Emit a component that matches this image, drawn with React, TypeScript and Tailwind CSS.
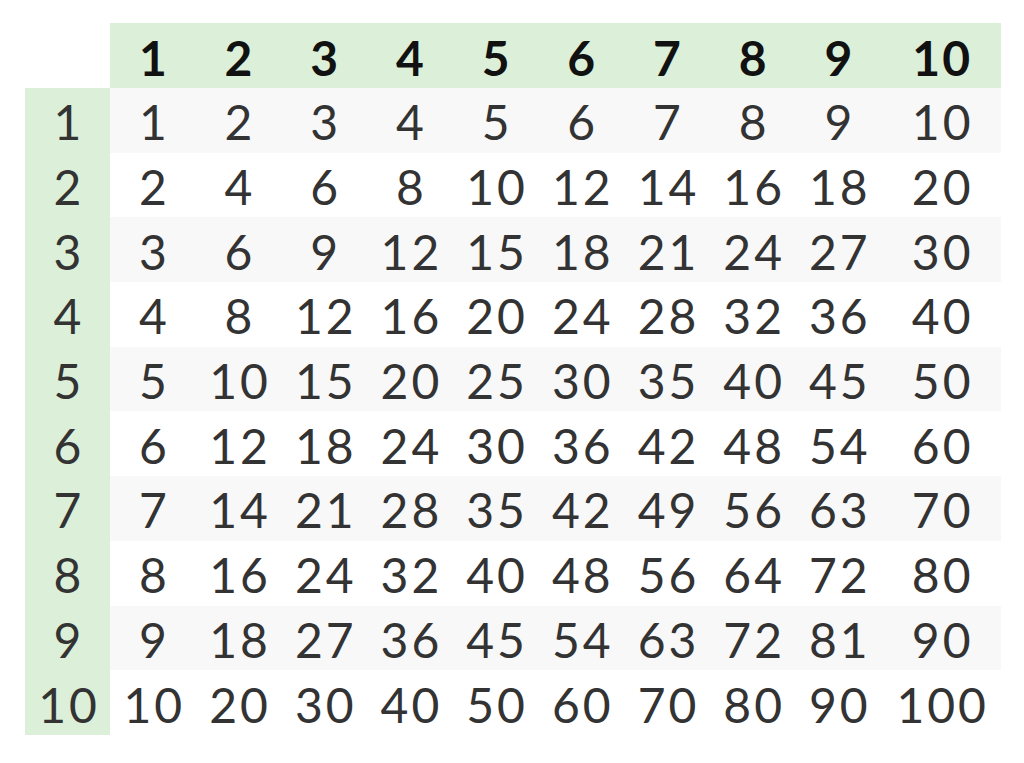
import React from 'react';

const nums = [1, 2, 3, 4, 5, 6, 7, 8, 9, 10];

const cols = 'grid grid-cols-[85px_repeat(9,85.7px)_120px]';

export default function App() {
  return (
    <div
      className="w-[1024px] h-[763px] bg-white pl-[25px] pt-[23px]"
      style={{ fontFamily: 'Lato, "Open Sans", sans-serif' }}
    >
      {/* Header row */}
      <div className={`${cols} h-[65px]`}>
        <div />
        {nums.map((n) => (
          <div
            key={n}
            className="flex items-center justify-center bg-[#dcefd8] text-[48px] font-bold text-[#111] leading-none pt-[4px] pl-[2px] tracking-[2px]"
          >
            {n}
          </div>
        ))}
      </div>
      {/* Body rows */}
      {nums.map((r) => (
        <div key={r} className={`${cols} h-[64.7px]`}>
          <div className="flex items-center justify-center bg-[#dcefd8] text-[48px] text-[#333] leading-none pt-[4px] pl-[3px] tracking-[3px]">
            {r}
          </div>
          {nums.map((c) => (
            <div
              key={c}
              className={`flex items-center justify-center text-[48px] text-[#333] leading-none pt-[4px] pl-[3px] tracking-[3px] ${
                r % 2 === 1 ? 'bg-[#f8f8f8]' : 'bg-white'
              }`}
            >
              {r * c}
            </div>
          ))}
        </div>
      ))}
    </div>
  );
}
